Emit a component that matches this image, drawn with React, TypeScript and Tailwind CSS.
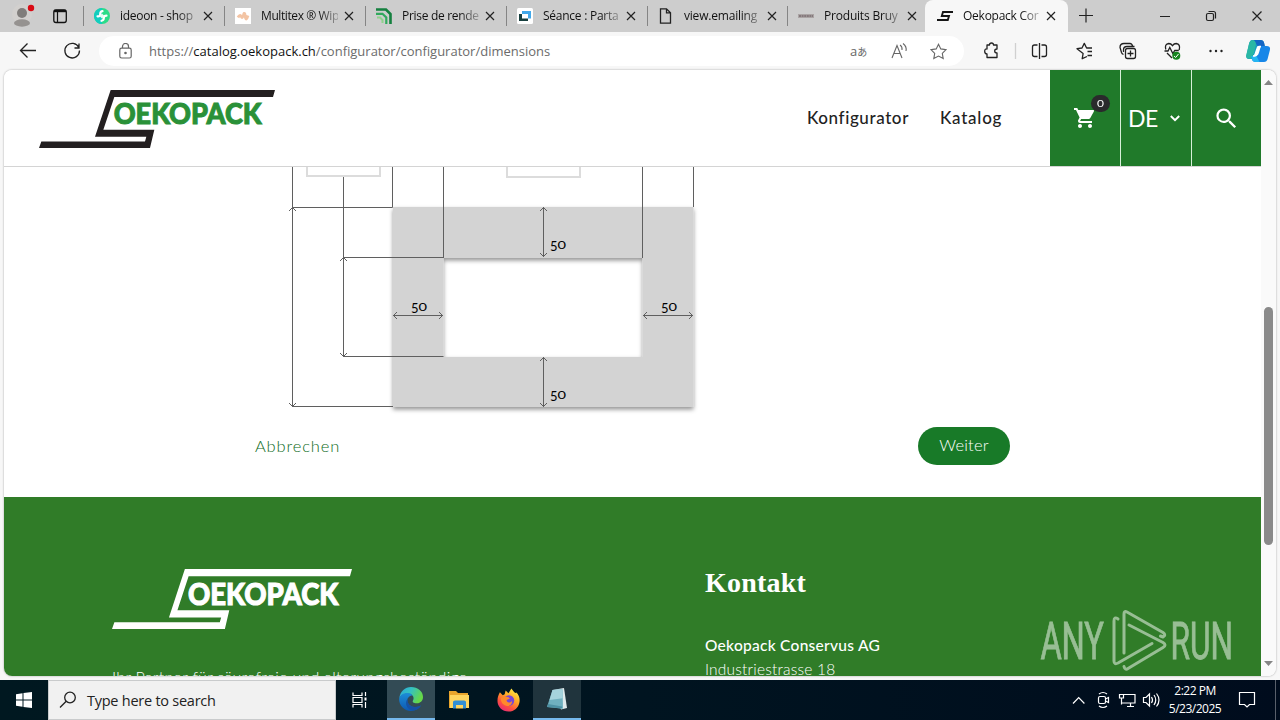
import React from 'react';
import { MdShoppingCart, MdSearch } from 'react-icons/md';

const ui = "font-['Open_Sans','Noto_Sans_CJK_JP',sans-serif]";

function Close() {
  return (
    <svg className="h-[10px] w-[10px] shrink-0" viewBox="0 0 10 10" fill="none" stroke="#222" strokeWidth="1.2">
      <path d="M1 1l8 8M9 1L1 9" />
    </svg>
  );
}

function Tab({ icon, title, width, tracking }: { icon: React.ReactNode; title: string; width: string; tracking: string }) {
  return (
    <div className={`flex h-8 shrink-0 items-center pl-[11px] ${width}`}>
      <span className="flex h-4 w-4 shrink-0 items-center justify-center">{icon}</span>
      <span className={`ml-[10px] mr-[6px] w-[77px] whitespace-nowrap bg-linear-to-r from-[#111] from-75% to-[#111]/25 bg-clip-text text-[12px] leading-[18px] text-transparent ${tracking}`}>
        {title}
      </span>
      <Close />
    </div>
  );
}

const Sep = () => <span className="-mr-px h-5 w-px shrink-0 bg-[#858585]" />;

function Logo({ frame, letters, className }: { frame: string; letters: string; className: string }) {
  return (
    <svg className={className} viewBox="117 72 708 172" preserveAspectRatio="none">
      <path fill={frame} d="M332 72H825L819 93H343L310 190H463L450 244H117L124 225H435L439 211H285Z" />
      <text x="341" y="174" fontFamily="Lato, sans-serif" fontWeight="900" fontSize="87" fill={letters} stroke={letters} strokeWidth="3" textLength="444" lengthAdjust="spacingAndGlyphs">
        OEKOPACK
      </text>
    </svg>
  );
}

function TabStrip() {
  return (
    <div className="flex h-8 shrink-0 items-center bg-[#cdcdcd]">
      <svg className="h-8 w-[83px] shrink-0" viewBox="0 0 83 32">
        <circle cx="22" cy="14" r="10" fill="#d2d0ce" />
        <circle cx="22" cy="13" r="5" fill="#807d7b" />
        <ellipse cx="22" cy="23" rx="8" ry="3.7" fill="#959290" />
        <circle cx="31" cy="8" r="3.2" fill="#d90a14" />
        <rect x="53.8" y="10" width="12.5" height="12.5" rx="2.2" fill="none" stroke="#111" strokeWidth="1.3" />
        <path d="M54 11h12" stroke="#111" strokeWidth="2.4" />
        <path d="M57.500 12v10" stroke="#111" strokeWidth="1.2" />
      </svg>
      <Sep />
      <Tab width="w-[141px]" tracking="tracking-[-0.3px]" title="ideoon - shop" icon={
        <svg viewBox="0 0 16 16" className="h-4 w-4"><circle cx="8" cy="8" r="8" fill="#2bdc88" /><path d="M3 1.800A8 8 0 0 0 8 16V0Q5 0 3 1.800Z" fill="#12cdbf" /><path d="M8.500 3.200Q6.200 3.200 6.200 6T3.500 8.300M12.500 7.700Q9.800 7.700 9.800 10T7.500 12.800" fill="none" stroke="#fff" strokeWidth="2.200" strokeLinecap="round" /><path d="M8 5.500l2.500 2.500L8 10.500 5.500 8z" fill="#e4fff4" /></svg>
      } />
      <Sep />
      <Tab width="w-[141px]" tracking="tracking-[-0.4px]" title="Multitex ® Wip" icon={
        <svg viewBox="0 0 16 16" className="h-4 w-4"><path fill="#fff" d="M0 0h16v16H0z" /><path d="M3 9.500q2-3.500 3.200-1t2.300-1.500 1.800 1.500 2.700-1" stroke="#f3c4a4" strokeWidth="2.800" fill="none" /></svg>
      } />
      <Sep />
      <Tab width="w-[141px]" tracking="tracking-[-0.3px]" title="Prise de rende" icon={
        <svg viewBox="0 0 16 16" className="h-4 w-4" fill="none"><path d="M0 1.500H10L14.500 6V16" stroke="#15803f" strokeWidth="2.600" /><path d="M0 5.800H6.500L10.300 9.500V16" stroke="#31a95d" strokeWidth="2.200" /><path d="M1 9.500H4L6.500 12V15" stroke="#8ed38b" strokeWidth="2" /></svg>
      } />
      <Sep />
      <Tab width="w-[141px]" tracking="tracking-[-0.25px]" title="Séance : Parta" icon={
        <svg viewBox="0 0 16 16" className="h-4 w-4"><rect width="16" height="16" rx="1.500" fill="#fff" /><path d="M5 3h9v7.500h-3V6H5z" fill="#42a9ea" /><path d="M2 6h3v4.500h6V13H2z" fill="#173f3e" /></svg>
      } />
      <Sep />
      <Tab width="w-[140px]" tracking="tracking-[-0.2px]" title="view.emailing" icon={
        <svg viewBox="0 0 16 16" className="h-4 w-4" fill="none" stroke="#222" strokeWidth="1.300"><path d="M2.500 .8h6l4 4v10.400h-10zM8.500 .8v4h4" /></svg>
      } />
      <Sep />
      <Tab width="w-[138px]" tracking="tracking-[-0.2px]" title="Produits Bruy" icon={
        <svg viewBox="0 0 16 16" className="h-4 w-4"><path d="M0 8h16" stroke="#aaa4a4" strokeWidth="4" /><path d="M1 8h14" stroke="#85797c" strokeWidth="2" strokeDasharray="2 .6" /></svg>
      } />
      <div className="flex h-full rounded-t-lg bg-[#f7f7f7] pl-px">
        <Tab width="w-[142px]" tracking="tracking-[-0.25px]" title="Oekopack Cor" icon={
          <svg viewBox="0 0 16 12" className="h-3 w-4" fill="none" stroke="#151515" strokeWidth="1.900"><path d="M16 2H6L4.800 6H12L10.800 10H0" /></svg>
        } />
      </div>
      <svg className="h-8 w-[212px] shrink-0" viewBox="1068 0 212 32" fill="none" stroke="#222" strokeWidth="1.200">
        <path d="M1079 15.500h14M1086 8.500v14M1160 16.500h10" />
        <rect x="1206.500" y="13.500" width="7" height="7" rx="1.500" />
        <path d="M1208.500 11.500h5q2 0 2 2v5M1252.500 11.500l9 9m0-9l-9 9" />
      </svg>
    </div>
  );
}

function Toolbar() {
  return (
    <div className="flex h-[38px] shrink-0 items-center bg-[#f7f7f7]">
      <svg className="h-[38px] w-[99px] shrink-0" viewBox="0 32 99 38" fill="none" stroke="#222" strokeWidth="1.300">
        <path d="M36 50.500H20.500m7-7l-7 7 7 7M78.800 47.500a7.300 7.300 0 1 0 .7 3M79 43.500v4.500h-4.500" />
      </svg>
      <div className="flex h-[30px] w-[865px] shrink-0 items-center rounded-full bg-white pl-5">
        <svg className="h-4 w-[13px] shrink-0" viewBox="0 0 13 16" fill="none" stroke="#666" strokeWidth="1.200"><rect x=".8" y="5.200" width="11.400" height="9.800" rx="1.800" /><path d="M3.500 5V3.500a3 3 0 0 1 6 0V5" /><circle cx="6.500" cy="10" r=".7" fill="#555" /></svg>
        <span className="ml-[17px] mt-px w-[401px] whitespace-nowrap text-[13px] text-[#6b6b6b]">https://<span className="text-[#111]">catalog.oekopack.ch</span>/configurator/configurator/dimensions</span>
        <span className="ml-[300px] w-[18px] whitespace-nowrap text-[13px] leading-4 text-[#666]">a<span className="text-[10px]">あ</span></span>
        <svg className="ml-[22px] h-[18px] w-[58px] shrink-0" viewBox="889 41 58 18" fill="none" stroke="#666" strokeWidth="1.100">
          <path d="M891 57l5-12.500 5 12.500m-8-4.500h6M899 44q2.500 1.500 2 5M902 42.500q4 3 3 7.500M937.500 43.200l2.300 4.700 5.200.8-3.700 3.700.9 5.200-4.700-2.500-4.700 2.500.9-5.200-3.700-3.700 5.200-.8z" />
        </svg>
      </div>
      <svg className="h-[38px] w-[316px] shrink-0" viewBox="964 32 316 38" fill="none" stroke="#222" strokeWidth="1.300">
        <path d="M987 45h2.500q0-2 2-2t2 2H997v4q-2.300 0-2.300 2t2.300 2v4.500h-10V54q-2.300 0-2.300-2.700t2.300-2.300z" strokeLinejoin="round" />
        <path d="M1015.500 43v16" stroke="#d0d0d0" />
        <path d="M1037.500 45h-3q-2 0-2 2v7.500q0 2 2 2h3M1039.500 43v16M1041.500 45h3q2 0 2 2v7.500q0 2-2 2h-3" />
        <path d="M1087 56.500l-4.800 2.200.9-5.100-6.100-4.900 5-.7 2.300-4.600 2.300 4.600h5.400M1087.500 51.500h4.500M1087.500 55.500h4.500" strokeLinejoin="round" />
        <rect x="1125.500" y="48.500" width="10" height="10" rx="2" />
        <path d="M1130.500 50.500v6M1127.500 53.500h6M1123.500 54.500q-1.500-.5-2-2l-1.500-5q0-4 4-4h6q2 0 2.700 3M1123.500 52v-2q0-3.500 3.500-3.500h7.500" />
        <path d="M1165.800 49.500q-1.500-5.500 3-6 2.200 0 3.700 2.200 1.500-2.200 3.700-2.200 4.500.5 3 6.500M1167 53l5 5M1164.500 51h3.500l1.800-3.500 3 6 2-3h4" />
        <circle cx="1176.300" cy="55.800" r="4" fill="#16851f" stroke="none" /><path d="M1174 56l1.700 1.500 2.800-3.500" stroke="#fff" strokeWidth="1" />
        <g fill="#222" stroke="none"><circle cx="1210.500" cy="51" r="1.200" /><circle cx="1216" cy="51" r="1.200" /><circle cx="1221.500" cy="51" r="1.200" /></g>
        <g stroke="none">
          <path d="M1252 40h8.500q3 0 3.600 3l.7 3h-5q-2 0-2.700 3l-2 7q-.8 3-3.600 3h-2.500q-3.500 0-2.500-4l2.700-12q.8-3 2.800-3z" fill="#179ac0" />
          <path d="M1253 40h7.500q3 0 3.600 3l.7 3h-7l-4-5z" fill="#1466c4" />
          <path d="M1247 52l2-8q1-4 4-4 2 0 3 4l-2 9-3 6q-5 0-5-3z" fill="#2ab7a4" />
          <path d="M1264 62h-8.500q-3 0-3.600-3l-.7-3h5q2 0 2.700-3l2-7h5.500q4.500 0 3.500 4l-2.300 9q-.8 3-3.600 3z" fill="#1787e8" />
          <path d="M1256 62q-3.500 0-4.200-3l-.6-3h5.300l3 6z" fill="#25b6f2" />
          <path d="M1257 54l2-6q.5-1.500 2-1.500h-2q-1.500 0-2 2l-2 6q-.5 1.500-2 1.500h2q1.500 0 2-2z" fill="#fff" stroke="#fff" />
        </g>
      </svg>
    </div>
  );
}

function SiteHeader() {
  return (
    <header className="flex h-[97px] shrink-0 items-start border-b border-[#d4d4d4] bg-white">
      <Logo frame="#231f20" letters="#2a9138" className="ml-[35px] mt-5 h-[58px] w-[236px] shrink-0" />
      <nav className="ml-auto flex h-24 items-center gap-8 pr-12 text-[17px] font-medium text-[#222]">
        <a className="w-[101px] whitespace-nowrap tracking-[0.6px]">Konfigurator</a>
        <a className="w-[62px] whitespace-nowrap tracking-[0.75px]">Katalog</a>
      </nav>
      <div className="flex h-24 gap-px bg-[#d7f0d9] text-white">
        <div className="relative flex w-[70px] items-center justify-center bg-[#207a2a]">
          <MdShoppingCart className="h-6 w-6" />
          <span className="absolute left-[41px] top-[25px] flex h-[17px] w-[19px] items-center justify-center rounded-full bg-[#2a2a2c]">
            <span className="scale-y-[0.8] text-[12px] leading-4">0</span>
          </span>
        </div>
        <div className="flex w-[70px] items-center bg-[#207a2a] pl-[7px]">
          <span className="w-[30px] text-[23px] tracking-[-0.5px]">DE</span>
          <svg className="ml-3 h-[7px] w-[10px]" viewBox="0 0 10 7" fill="none" stroke="#fff" strokeWidth="2"><path d="M.8 1L5 5.200 9.200 1" /></svg>
        </div>
        <div className="flex w-[69px] items-center justify-center bg-[#207a2a]"><MdSearch className="h-[27px] w-[27px]" /></div>
      </div>
    </header>
  );
}

function VArrow({ x, a, b }: { x: number; a: number; b: number }) {
  return <path d={`M${x} ${a}V${b}M${x - 3.5} ${a + 4}L${x} ${a + .5}L${x + 3.5} ${a + 4}M${x - 3.5} ${b - 4}L${x} ${b - .5}L${x + 3.5} ${b - 4}`} />;
}
function HArrow({ y, a, b }: { y: number; a: number; b: number }) {
  return <path d={`M${a} ${y}H${b}M${a + 4} ${y - 3.5}L${a + .5} ${y}L${a + 4} ${y + 3.5}M${b - 4} ${y - 3.5}L${b - .5} ${y}L${b - 4} ${y + 3.5}`} />;
}

function Measure({ x, y }: { x: number; y: number }) {
  return (
    <text x={x} y={y}>
      <tspan y={y + 1.5}>5</tspan>
      <tspan fontSize="10.5" x={x + 7.5} y={y} textLength="8.5" lengthAdjust="spacingAndGlyphs">0</tspan>
    </text>
  );
}

function Diagram() {
  return (
    <svg className="ml-[276px] h-[260px] w-[430px] shrink-0" viewBox="280 167 430 260">
      <defs>
        <filter id="frame-shadow" x="-10%" y="-10%" width="120%" height="120%">
          <feDropShadow dx="0" dy="2.500" stdDeviation="2" floodColor="#000" floodOpacity=".42" />
        </filter>
      </defs>
      <path d="M393 207H693.500V407H393ZM443.500 258V357H642.500V258Z" fillRule="evenodd" fill="#d3d3d3" filter="url(#frame-shadow)" />
      <g fill="none" stroke="#dcdcdc" strokeWidth="2">
        <path d="M307 160V176H380V160M507 160V177H580V160" />
      </g>
      <g fill="none" stroke="#5f5f5f" strokeWidth="1">
        <path d="M292.500 167V207M392.500 167V207.500H292.500M443.500 167V258M642.500 167V258M693.500 167V207M343.500 177V258M343.500 257.500H443.500M343.500 356.500H443.500M292.500 406.500H393" />
        <VArrow x={292.5} a={207} b={407} />
        <VArrow x={343.5} a={257} b={357} />
        <VArrow x={543.5} a={207} b={257} />
        <VArrow x={543.5} a={357} b={407} />
        <HArrow y={315.5} a={393} b={443} />
        <HArrow y={315.5} a={643} b={693} />
      </g>
      <g fontFamily="Lato, sans-serif" fontSize="13" fill="#000">
        <Measure x={550} y={249} />
        <Measure x={550} y={399} />
        <Measure x={411} y={311} />
        <Measure x={661} y={311} />
      </g>
    </svg>
  );
}

function SiteFooter() {
  return (
    <footer className="flex h-[179px] shrink-0 overflow-hidden bg-[#307c28] pl-[108px] pt-[72px] text-white">
      <div className="w-[593px] shrink-0">
        <Logo frame="#fff" letters="#fff" className="h-[60px] w-[240px]" />
        <p className="mt-9 whitespace-nowrap text-[16px] font-light leading-6 tracking-[0.27px]">Ihr Partner für säurefreie und alterungsbeständige</p>
      </div>
      <div className="w-[300px] shrink-0">
        <h2 className="font-['Liberation_Serif',serif] text-[28px] font-bold leading-7 tracking-[0.2px]">Kontakt</h2>
        <p className="mt-9 whitespace-nowrap text-[15.5px] font-medium leading-6 tracking-[0.27px]">Oekopack Conservus AG</p>
        <p className="whitespace-nowrap text-[15.5px] font-light leading-6 tracking-[0.2px]">Industriestrasse 18</p>
      </div>
      <svg className="ml-[29px] mt-[38px] h-[70px] w-[203px] shrink-0" viewBox="1032 607 203 70" fill="none" stroke="#fff" opacity=".5">
        <g fill="#fff" stroke="#fff" strokeWidth=".8" fontFamily="Roboto, sans-serif" fontSize="51">
          <text transform="translate(1038.500 659) scale(.64 1)" textLength="99" lengthAdjust="spacing">ANY</text>
          <text transform="translate(1168.500 659) scale(.62 1)" textLength="101" lengthAdjust="spacing">RUN</text>
        </g>
        <g strokeWidth="3" strokeLinejoin="round" strokeLinecap="round">
          <path d="M1116 619q-4-3-4 2V661q0 4 4 2L1150 643.500" />
          <path d="M1122 653V614q0-3.500 3-2L1161 632.500q3.500 2.500 0 4.500l-2.500-1" />
          <path d="M1127 625L1161 642.500q4 2.500 0 5L1126 668.500q-3 2-4-2" />
        </g>
      </svg>
    </footer>
  );
}

function Scrollbar() {
  return (
    <svg className="h-[606px] w-[15px] shrink-0 bg-[#fafafa]" viewBox="0 0 15 606">
      <path d="M3 15l4.500-5 4.500 5zM3 591l4.500 5 4.500-5z" fill="#858585" />
      <rect x="3" y="237" width="9" height="238" rx="4.500" fill="#8a8a8a" />
    </svg>
  );
}

function Taskbar() {
  return (
    <div className="flex h-10 shrink-0 bg-linear-to-r from-[#001820] via-[#001420] to-[#000c1d] text-white">
      <div className="flex w-12 items-center justify-center">
        <svg className="h-4 w-4" viewBox="0 0 16 16" fill="#fff"><path d="M0 2.200L6.500 1.300V7.500H0zM7.500 1.100L16 0V7.500H7.500zM0 8.500h6.500v6.200L0 13.800zM7.500 8.500H16V16l-8.500-1.100z" /></svg>
      </div>
      <div className="flex w-[288px] items-center border border-[#c9cbcc] bg-[#f1f1f1] text-[#222]">
        <svg className="ml-[10px] h-[18px] w-[18px]" viewBox="0 0 18 18" fill="none" stroke="#222" strokeWidth="1.300"><circle cx="11" cy="6.500" r="5.300" /><path d="M7.200 10.300L1 16.500" /></svg>
        <span className="ml-[10px] mt-0.5 whitespace-nowrap text-[14.500px] tracking-[-0.25px]">Type here to search</span>
      </div>
      <div className="flex w-[51px] items-center justify-center">
        <svg className="-ml-[3px] h-4 w-4" viewBox="0 0 16 16" fill="none" stroke="#fff" strokeWidth="1.200"><path d="M1 .5v3h9v-3M1 15.500v-3h9v3M1 5.500h9v5H1zM13.500 0v4M13.500 10v6" /><path d="M12.500 5.500h2v3h-2z" fill="#fff" stroke="none" /></svg>
      </div>
      <div className="flex w-12 items-center justify-center border-b-2 border-[#76b9ed] bg-[#334b55]">
        <svg className="h-6 w-6" viewBox="0 0 24 24">
          <defs>
            <linearGradient id="edge-top" x1="0" y1="0" x2="1" y2=".4"><stop offset="0" stopColor="#2aa8dc" /><stop offset=".5" stopColor="#35c1c1" /><stop offset="1" stopColor="#66d848" /></linearGradient>
            <linearGradient id="edge-low" x1="0" y1="0" x2="0" y2="1"><stop offset="0" stopColor="#1c8dd8" /><stop offset="1" stopColor="#0d58b0" /></linearGradient>
          </defs>
          <path d="M.3 11C1.500 4 6 0 12 0c7 0 12 4.500 12 10 0 4-3 6.300-6.300 6.300-3.200 0-4.700-1.200-3.700-2.700C16 10 13 6.500 8.500 6.500 5 6.500 2 8 .3 11z" fill="url(#edge-top)" />
          <path d="M.1 12C.8 8 4.500 6 8.300 6c2.400 0 4.200.8 5.200 2.200-4.500 1-6 4-4.800 7.400 1.600 4.200 7.500 6.200 13.300 3-2 3.400-5.500 5.400-10 5.400C5 24 0 18 .1 12z" fill="url(#edge-low)" />
          <path d="M8.600 12c-.8 6 5 10.300 13.400 6.600-2 3-4.500 4.500-8 5C8 23 5 16 8.600 12z" fill="#1551a5" />
        </svg>
      </div>
      <div className="flex w-[49px] items-center justify-center">
        <svg className="h-5 w-[21px]" viewBox="0 0 21 20"><path d="M0 1h7l2 2h10v15H0z" fill="#e9a52c" /><path d="M1 5h19v13H1z" fill="#ffd55f" /><path d="M4 18.500V12q0-1.500 2-1.500h9q2 0 2 1.500v6.500h-3V15H7v3.500z" fill="#328fd4" /><path d="M7 15h7v3.500H7z" fill="#ffd55f" /></svg>
      </div>
      <div className="flex w-[49px] items-center justify-center">
        <svg className="h-6 w-[23px]" viewBox="0 0 24 24">
          <defs><linearGradient id="fox" x1=".8" y1="0" x2=".2" y2="1"><stop offset="0" stopColor="#fff044" /><stop offset=".4" stopColor="#ffa526" /><stop offset=".7" stopColor="#ff523d" /><stop offset="1" stopColor="#e3267c" /></linearGradient></defs>
          <path d="M3 4l3 3 2-1 1-4 3 3 3-5 3 4 2 1v-1c3 3 4 6 3.500 10C22.500 20 18 24 12 24 5.500 24 .5 19 .5 13 .5 9 1.500 7 3 4z" fill="url(#fox)" />
          <circle cx="12.500" cy="12.500" r="5.500" fill="#7846d5" />
          <path d="M4 10l4-2 4 1 1.500 1.500-3.500 1.500c0 3 3.500 3.500 5.500 1 1 4-3 6-6 5-4-1-5.500-4-5.500-8z" fill="#ff8a2b" />
        </svg>
      </div>
      <div className="flex w-12 items-center justify-center border-b-2 border-[#76b9ed] bg-[#20343d]">
        <svg className="h-[22px] w-[22px]" viewBox="0 0 22 22"><path d="M6.500 2L18 0l3 20-6 1.500z" fill="#dfeaec" /><path d="M6.500 2l10-.7.500 19.500L1 19z" fill="#6fb0bf" /><path d="M6.500 2l10-.7.200 9L3.500 12z" fill="#a5d3dc" /><path d="M2 16l14 2.500v2L1 19z" fill="#4d91a4" /></svg>
      </div>
      <svg className="ml-auto h-10 w-[96px] shrink-0" viewBox="1070 680 96 40" fill="none" stroke="#fff" strokeWidth="1.200">
        <path d="M1073 703.500l5.700-6 5.700 6M1099 694q4-3 8 0M1099 706q4 3 8 0" />
        <rect x="1098.500" y="696.500" width="7" height="7" rx="1.500" /><path d="M1105.500 699l3-1.500v5l-3-1.500" />
        <path d="M1124 694.500h11v8.500h-13M1127 706.500h7M1130.500 703v3.500M1119.500 694.500h4v3.500h-4zM1121.500 698v6.500" />
        <path d="M1143.500 697.500h2.500l3.500-3.500v12l-3.500-3.500h-2.500zM1151.500 697q2 3 0 6M1154 695q3.500 5 0 10M1156.500 693.500q5 6.500 0 13" />
      </svg>
      <div className="flex w-[58px] shrink-0 flex-col items-center justify-center whitespace-nowrap text-[12px] leading-[18px] tracking-[-0.5px]">
        <span>2:22 PM</span><span>5/23/2025</span>
      </div>
      <svg className="h-10 w-[56px] shrink-0" viewBox="1224 680 56 40" fill="none" stroke="#fff" strokeWidth="1.200">
        <path d="M1239.500 692.500h15v12h-5l-2.500 2.500-2.500-2.500h-5z" /><path d="M1275.500 680v40" stroke="#59606b" strokeWidth="1" />
      </svg>
    </div>
  );
}

export default function App() {
  return (
    <div className={`flex h-[720px] w-[1280px] flex-col overflow-hidden bg-[#f7f7f7] ${ui}`}>
      <TabStrip />
      <Toolbar />
      <div className="mx-1 mb-1 flex h-[606px] shrink-0 overflow-hidden rounded-lg bg-white shadow-[0_0_2px_#999]">
        <main className="flex w-[1257px] shrink-0 flex-col font-['Lato',sans-serif]">
          <SiteHeader />
          <Diagram />
          <div className="flex h-[70px] shrink-0 items-start justify-between pl-[251px] pr-[251px]">
            <a className="flex h-[38px] w-[85px] items-center whitespace-nowrap text-[16.5px] font-light tracking-[0.85px] text-[#0c6a22]">Abbrechen</a>
            <button className="h-[38px] w-[92px] rounded-full bg-[#187a28] pb-0.5 text-[16.5px] font-light tracking-[0.2px] text-white">Weiter</button>
          </div>
          <SiteFooter />
        </main>
        <Scrollbar />
      </div>
      <Taskbar />
    </div>
  );
}
